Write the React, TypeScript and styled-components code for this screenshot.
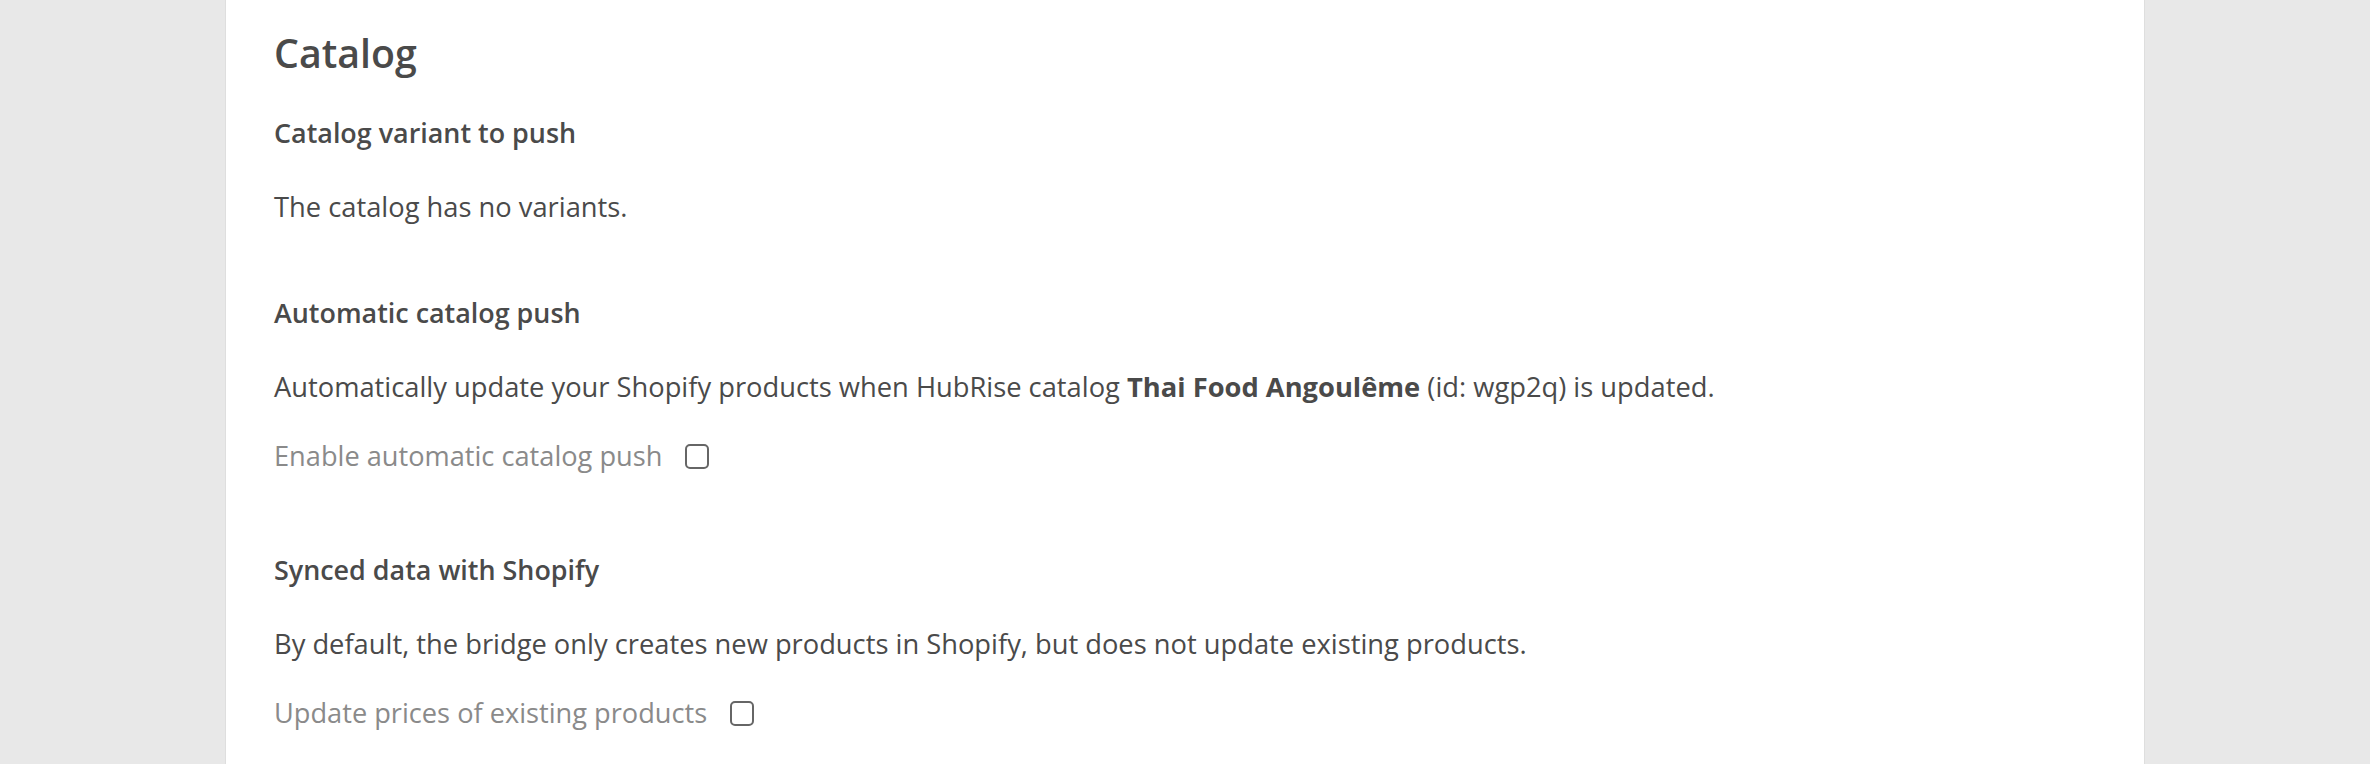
import React from "react";
import styled, { createGlobalStyle } from "styled-components";

const GlobalStyle = createGlobalStyle`
  html, body {
    margin: 0;
    padding: 0;
    background: #e8e8e8;
    overflow: hidden;
  }
  body {
    font-family: "Open Sans", "Noto Sans", sans-serif;
    color: #4a4a4a;
  }
`;

const Page = styled.div`
  display: flex;
  justify-content: center;
  height: 764px;
  overflow: hidden;
  background: #e8e8e8;
`;

const Card = styled.main`
  width: 1920px;
  box-sizing: border-box;
  background: #ffffff;
  border-left: 1px solid #dedede;
  border-right: 1px solid #dedede;
  padding: 30px 48px 0 48px;
  display: flex;
  flex-direction: column;
`;

const Title = styled.h2`
  margin: 0 0 39px 0;
  font-size: 39.3px;
  line-height: 46px;
  font-weight: 600;
  color: #4a4a4a;
`;

const Sections = styled.div`
  display: flex;
  flex-direction: column;
  gap: 68px;
`;

const Section = styled.section`
  display: flex;
  flex-direction: column;
`;

const SubTitle = styled.h3`
  margin: 0 0 36px 0;
  font-size: 26.9px;
  line-height: 36px;
  font-weight: 600;
  color: #4a4a4a;
`;

const Text = styled.p`
  margin: 0;
  font-size: 27.3px;
  line-height: 40px;
  color: #4a4a4a;
  b {
    font-weight: 700;
  }
`;

const CheckRow = styled.label`
  margin-top: 29px;
  margin-bottom: 8px;
  display: flex;
  align-items: center;
  gap: 23px;
  font-size: 27.2px;
  line-height: 40px;
  color: #8a8a8a;
`;

const Box = styled.span`
  width: 20px;
  height: 21px;
  border: 2px solid #666666;
  border-radius: 5px;
  background: #ffffff;
  flex: none;
`;

export default function App() {
  return (
    <>
      <GlobalStyle />
      <Page>
        <Card>
          <Title>Catalog</Title>
          <Sections>
            <Section>
              <SubTitle>Catalog variant to push</SubTitle>
              <Text>The catalog has no variants.</Text>
            </Section>
            <Section>
              <SubTitle>Automatic catalog push</SubTitle>
              <Text>
                Automatically update your Shopify products when HubRise catalog{" "}
                <b>Thai Food Angoulême</b> (id: wgp2q) is updated.
              </Text>
              <CheckRow>
                Enable automatic catalog push
                <Box />
              </CheckRow>
            </Section>
            <Section>
              <SubTitle>Synced data with Shopify</SubTitle>
              <Text>
                By default, the bridge only creates new products in Shopify, but does not update
                existing products.
              </Text>
              <CheckRow>
                Update prices of existing products
                <Box />
              </CheckRow>
            </Section>
          </Sections>
        </Card>
      </Page>
    </>
  );
}
